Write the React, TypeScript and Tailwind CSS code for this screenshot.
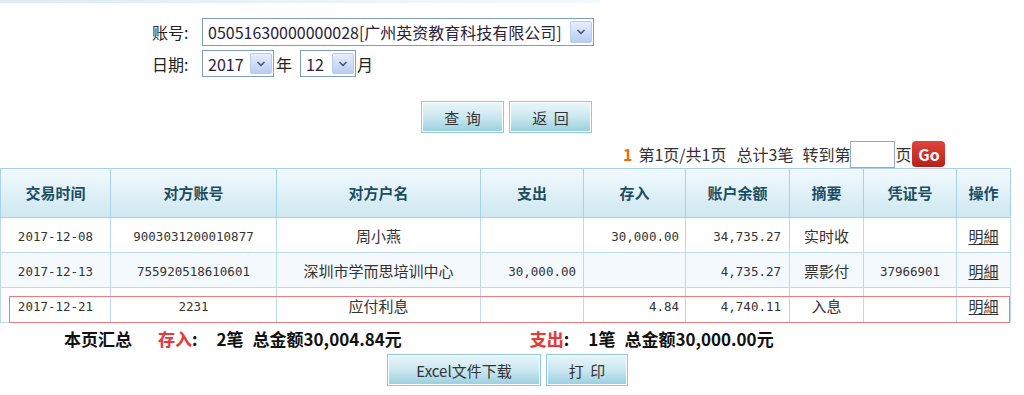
import React from 'react';
import { ChevronDown } from 'lucide-react';

type Row = {
  date: string;
  acct: string;
  name: string;
  out: string;
  inc: string;
  bal: string;
  memo: string;
  voucher: string;
  bg: string;
};

const rows: Row[] = [
  { date: '2017-12-08', acct: '9003031200010877', name: '周小燕', out: '', inc: '30,000.00', bal: '34,735.27', memo: '实时收', voucher: '', bg: 'bg-white' },
  { date: '2017-12-13', acct: '755920518610601', name: '深圳市学而思培训中心', out: '30,000.00', inc: '', bal: '4,735.27', memo: '票影付', voucher: '37966901', bg: 'bg-[#f3f9fc]' },
  { date: '2017-12-21', acct: '2231', name: '应付利息', out: '', inc: '4.84', bal: '4,740.11', memo: '入息', voucher: '', bg: 'bg-white' },
];

const headers = ['交易时间', '对方账号', '对方户名', '支出', '存入', '账户余额', '摘要', '凭证号', '操作'];

const mono = "font-['DejaVu_Sans_Mono',monospace] text-[12.5px]";

function FakeSelect({ value, width }: { value: string; width: string }) {
  return (
    <div className={`flex h-full items-center border border-[#7f9db9] bg-white ${width}`}>
      <span className="flex-1 whitespace-nowrap pl-[5px] text-[16px] leading-[20px] text-[#2a2238]">{value}</span>
      <span className="mr-[1px] flex h-[calc(100%-4px)] w-[22px] shrink-0 items-center justify-center rounded-[2px] border border-[#b9cbee] bg-gradient-to-b from-[#e6eefd] to-[#b7cdf4]">
        <ChevronDown size={12} strokeWidth={3.5} className="text-[#4a5d88]" />
      </span>
    </div>
  );
}

function BlueButton({ label, width }: { label: string; width: string }) {
  return (
    <button
      type="button"
      className={`h-[32px] ${width} border border-[#8fcadb] bg-gradient-to-b from-[#eaf6fa] via-[#cbe7f0] to-[#98cfdf] text-[15px] leading-none text-[#333] shadow-[inset_0_0_0_1px_#ffffff]`}
    >
      {label}
    </button>
  );
}

export default function App() {
  return (
    <div className="h-[395px] w-[1024px] overflow-hidden bg-white font-['Noto_Sans_CJK_SC',sans-serif] text-[#333]">
      <div className="h-[3px] w-[600px] bg-gradient-to-r from-[#dcedf6] to-[#f3f9fc]" />

      {/* 查询条件 */}
      <div className="ml-[152px] mt-[15px] flex flex-col gap-[4px]">
        <div className="flex h-[28px] items-center">
          <span className="w-[50px] text-[16px] leading-[20px] text-[#222]">账号:</span>
          <FakeSelect value="05051630000000028[广州英资教育科技有限公司]" width="w-[392px]" />
        </div>
        <div className="flex h-[27px] items-center">
          <span className="w-[50px] text-[16px] leading-[20px] text-[#222]">日期:</span>
          <FakeSelect value="2017" width="w-[72px]" />
          <span className="ml-[2px] w-[24px] text-[16px] leading-[20px] text-[#222]">年</span>
          <FakeSelect value="12" width="w-[56px]" />
          <span className="ml-[1px] text-[16px] leading-[20px] text-[#222]">月</span>
        </div>
      </div>

      <div className="ml-[421px] mt-[24px] flex gap-[5px]">
        <BlueButton label="查  询" width="w-[83px] whitespace-pre" />
        <BlueButton label="返  回" width="w-[83px] whitespace-pre" />
      </div>

      {/* 分页 */}
      <div className="mt-[7px] flex h-[28px] items-center pl-[623px] text-[16px] leading-none text-[#333]">
        <span className="font-bold text-[#f26a0d]">1</span>
        <span className="ml-[6px]">第1页/共1页</span>
        <span className="ml-[10px]">总计3笔</span>
        <span className="ml-[9px]">转到第</span>
        <span className="h-[27px] w-[45px] border border-[#93aac6] bg-white" />
        <span>页</span>
        <span className="ml-[1px] flex h-[26px] w-[33px] items-center justify-center rounded-[4px] bg-gradient-to-b from-[#e0453c] to-[#b81f18] text-[16px] font-bold text-white">
          Go
        </span>
      </div>

      {/* 明细表 */}
      <div className="relative w-[1010px]">
        <table className="w-[1010px] table-fixed border-collapse">
          <colgroup>
            <col className="w-[110px]" />
            <col className="w-[166px]" />
            <col className="w-[204px]" />
            <col className="w-[103px]" />
            <col className="w-[102px]" />
            <col className="w-[104px]" />
            <col className="w-[74px]" />
            <col className="w-[93px]" />
            <col className="w-[54px]" />
          </colgroup>
          <thead>
            <tr className="h-[49px] bg-gradient-to-b from-[#f2fafd] to-[#cde7f1]">
              {headers.map((h) => (
                <th key={h} className="border border-[#a8d2e2] p-0 text-center text-[15px] font-bold text-[#1b4d63]">
                  {h}
                </th>
              ))}
            </tr>
          </thead>
          <tbody>
            {rows.map((r) => (
              <tr key={r.date} className={`h-[35px] ${r.bg}`}>
                <td className={`border border-[#bcdbe7] pt-[4px] text-center ${mono}`}>{r.date}</td>
                <td className={`border border-[#bcdbe7] pt-[4px] text-center ${mono}`}>{r.acct}</td>
                <td className="border border-[#bcdbe7] pt-[3px] text-center text-[15px]">{r.name}</td>
                <td className={`border border-[#bcdbe7] pr-[7px] pt-[4px] text-right ${mono}`}>{r.out}</td>
                <td className={`border border-[#bcdbe7] pr-[6px] pt-[4px] text-right ${mono}`}>{r.inc}</td>
                <td className={`border border-[#bcdbe7] pr-[8px] pt-[4px] text-right ${mono}`}>{r.bal}</td>
                <td className="border border-[#bcdbe7] pt-[3px] text-center text-[15px]">{r.memo}</td>
                <td className={`border border-[#bcdbe7] pt-[4px] text-center ${mono}`}>{r.voucher}</td>
                <td className="border border-[#bcdbe7] pt-[3px] text-center text-[15px]">
                  <a className="underline underline-offset-2">明細</a>
                </td>
              </tr>
            ))}
          </tbody>
        </table>
        {/* 标注框 */}
        <div className="pointer-events-none absolute left-[9px] top-[128px] h-[27px] w-[1001px] border border-[#ec7b7b]" />
      </div>

      {/* 本页汇总 */}
      <div className="flex h-[30px] items-center text-[17px] font-bold leading-none text-[#111]">
        <span className="ml-[64px]">本页汇总</span>
        <span className="ml-[26px] text-[#e23b3b] [text-shadow:0_0_1px_#f7b1b1]">存入</span>
        <span>:</span>
        <span className="ml-[19px]">2笔</span>
        <span className="ml-[9px]">总金额30,004.84元</span>
        <span className="ml-[128px] text-[#e23b3b] [text-shadow:0_0_1px_#f7b1b1]">支出</span>
        <span>:</span>
        <span className="ml-[19px]">1笔</span>
        <span className="ml-[9px]">总金额30,000.00元</span>
      </div>

      <div className="ml-[387px] mt-[1px] flex gap-[5px]">
        <BlueButton label="Excel文件下载" width="w-[154px]" />
        <BlueButton label="打  印" width="w-[82px] whitespace-pre" />
      </div>
    </div>
  );
}
